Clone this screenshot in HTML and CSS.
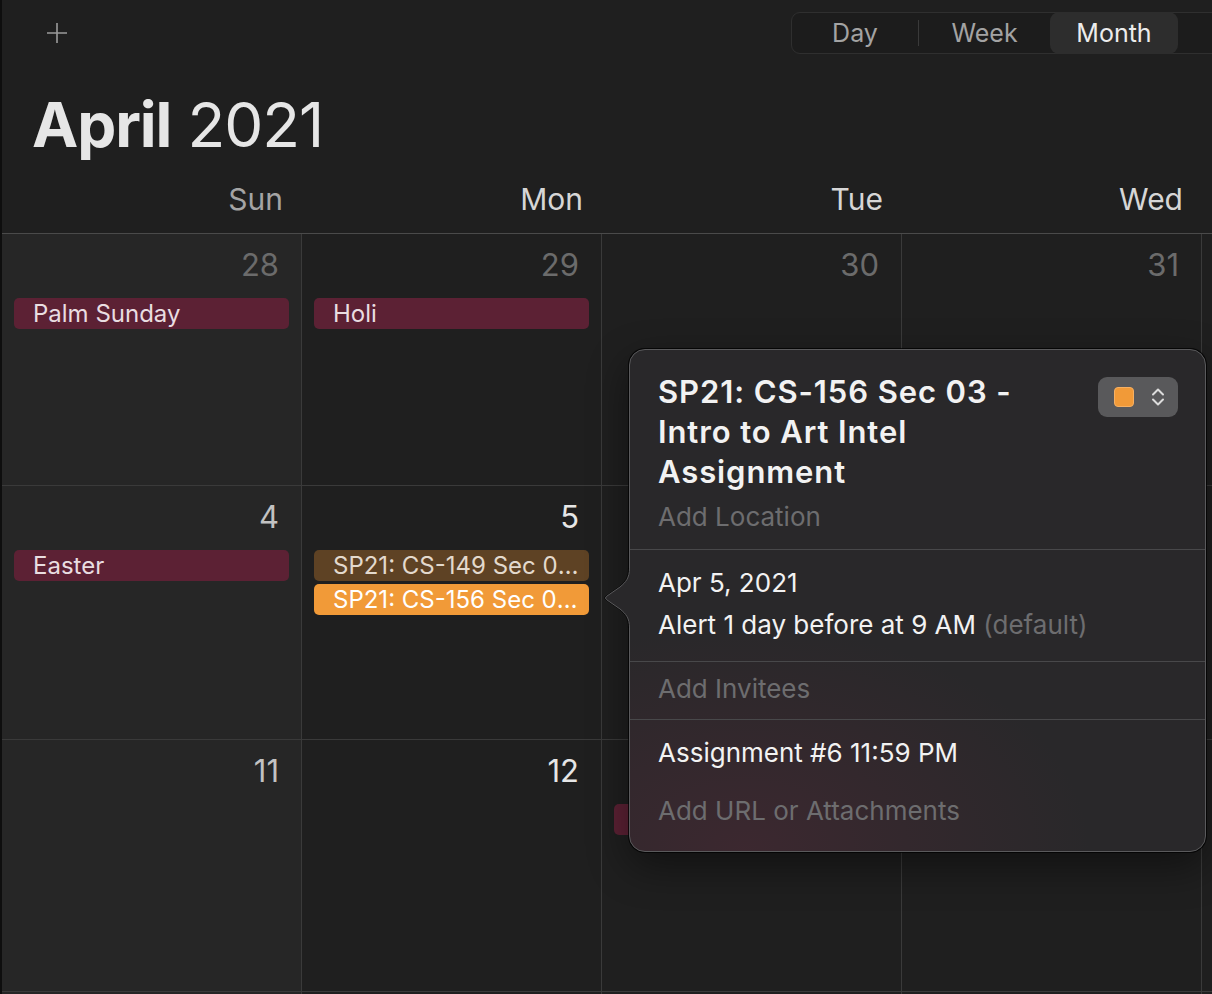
FILE: index.html
```html
<!DOCTYPE html>
<html lang="en">
<head>
<meta charset="utf-8">
<title>Calendar – April 2021</title>
<link rel="stylesheet" href="styles.css">
</head>
<body>
<div class="window">
  <header class="toolbar">
    <button class="add-btn" aria-label="Add event">
      <svg width="22" height="22" viewBox="0 0 22 22"><path d="M11 1v20M1 11h20" stroke="#9b9b9b" stroke-width="1.6" fill="none"/></svg>
    </button>
    <nav class="seg">
      <span class="seg-item seg-day">Day</span>
      <span class="seg-sep"></span>
      <span class="seg-item seg-week">Week</span>
      <span class="seg-item seg-month active">Month</span>
      <span class="seg-item seg-year">Year</span>
    </nav>
  </header>

  <h1 class="title"><strong>April</strong> 2021</h1>

  <div class="weekdays">
    <div class="wd wd-sun">Sun</div>
    <div class="wd">Mon</div>
    <div class="wd">Tue</div>
    <div class="wd">Wed</div>
    <div class="wd">Thu</div>
  </div>

  <div class="month">
    <div class="cell sun other"><div class="num">28</div><div class="events"><div class="ev ev-holiday">Palm Sunday</div></div></div>
    <div class="cell other"><div class="num">29</div><div class="events"><div class="ev ev-holiday">Holi</div></div></div>
    <div class="cell other"><div class="num">30</div></div>
    <div class="cell other"><div class="num">31</div></div>
    <div class="cell"><div class="num">1</div></div>

    <div class="cell sun"><div class="num">4</div><div class="events"><div class="ev ev-holiday">Easter</div></div></div>
    <div class="cell"><div class="num">5</div><div class="events"><div class="ev ev-course">SP21: CS-149 Sec 01 - Data Structures Quiz</div><div class="ev ev-selected">SP21: CS-156 Sec 03 - Intro to Art Intel Assignment</div></div></div>
    <div class="cell"><div class="num">6</div></div>
    <div class="cell"><div class="num">7</div></div>
    <div class="cell"><div class="num">8</div></div>

    <div class="cell sun"><div class="num">11</div></div>
    <div class="cell"><div class="num">12</div></div>
    <div class="cell"><div class="num">13</div><div class="events"><div class="ev ev-holiday">Ramadan</div></div></div>
    <div class="cell"><div class="num">14</div></div>
    <div class="cell"><div class="num">15</div></div>

    <div class="cell sun"><div class="num">18</div></div>
    <div class="cell"><div class="num">19</div></div>
    <div class="cell"><div class="num">20</div></div>
    <div class="cell"><div class="num">21</div></div>
    <div class="cell"><div class="num">22</div></div>
  </div>

  <section class="popover">
    <div class="pop-sec pop-head">
      <div class="pop-head-text">
        <h2 class="pop-title">SP21: CS-156 Sec 03 - Intro to Art Intel Assignment</h2>
        <div class="pop-line muted">Add Location</div>
      </div>
      <button class="swatch" aria-label="Calendar colour">
        <span class="swatch-color"></span>
        <svg width="14" height="22" viewBox="0 0 14 22"><path d="M2 8.5L7 3.5L12 8.5M2 13.5L7 18.5L12 13.5" stroke="#dcdcdc" stroke-width="2" fill="none" stroke-linecap="round" stroke-linejoin="round"/></svg>
      </button>
    </div>
    <div class="pop-sec pop-when">
      <div class="pop-line tall">Apr 5, 2021</div>
      <div class="pop-line tall">Alert 1 day before at 9 AM <span class="muted">(default)</span></div>
    </div>
    <div class="pop-sec pop-invitees">
      <div class="pop-line muted">Add Invitees</div>
    </div>
    <div class="pop-sec pop-notes">
      <div class="pop-line">Assignment #6 11:59 PM</div>
      <div class="pop-line muted">Add URL or Attachments</div>
    </div>
    <svg class="pop-arrow" width="28" height="60" viewBox="0 0 28 60">
      <path d="M26.5 0C26.5 10 23 14 17 19L3.6 28.3Q1.2 30 3.6 31.7L17 41C23 46 26.5 50 26.5 60L28 60L28 0Z" fill="#29282a"/>
      <path d="M26.5 0C26.5 10 23 14 17 19L3.6 28.3Q1.2 30 3.6 31.7L17 41C23 46 26.5 50 26.5 60" fill="none" stroke="#5a5a5c" stroke-width="1"/>
    </svg>
  </section>
</div>
</body>
</html>
```

FILE: styles.css
```css
* { box-sizing: border-box; }

html, body {
  margin: 0;
  height: 100%;
}

body {
  background: #1f1f1f;
  overflow: hidden;
  font-family: Inter, "Noto Sans", "Liberation Sans", sans-serif;
  color: #e5e5e5;
}

.window {
  position: relative;
  min-height: 100vh;
  border-left: 2px solid #0e0e0e;
}

/* ---------- toolbar ---------- */
.toolbar {
  display: flex;
  align-items: flex-start;
  height: 68px;
  padding-left: 44px;
}

.add-btn {
  display: block;
  width: 22px;
  height: 22px;
  margin-top: 22px;
  padding: 0;
  border: 0;
  background: none;
}

.seg {
  flex: none;
  display: flex;
  align-items: center;
  height: 42px;
  margin-top: 12px;
  margin-left: auto;
  margin-right: -97px;
  border: 1px solid #2f2f2f;
  border-radius: 9px;
  background: #1c1c1c;
  font-size: 25px;
  color: #a3a3a3;
}

.seg-item {
  display: flex;
  align-items: center;
  justify-content: center;
  height: 40px;
}

.seg-day { width: 126px; }
.seg-week { width: 131px; }
.seg-month { width: 128px; }
.seg-year { width: 130px; }

.seg-sep {
  width: 1px;
  height: 26px;
  background: #3a3a3a;
}

.seg-item.active {
  height: 42px;
  border-radius: 9px;
  background: #2d2d2d;
  color: #ececec;
}

/* ---------- title ---------- */
.title {
  margin: 26px 0 0;
  padding-left: 30px;
  font-size: 62px;
  line-height: 62px;
  font-weight: 400;
  letter-spacing: -1.1px;
  color: #e6e6e6;
}

.title strong { font-weight: 700; }

/* ---------- weekdays ---------- */
.weekdays {
  display: grid;
  grid-template-columns: repeat(5, 300px);
  height: 78px;
  padding-top: 25px;
  border-bottom: 1px solid #4a4a4a;
}

.wd {
  padding-right: 19px;
  text-align: right;
  font-size: 30px;
  line-height: 36px;
  color: #d6d6d6;
}

.wd-sun { color: #a4a4a4; }

/* ---------- month grid ---------- */
.month {
  display: grid;
  grid-template-columns: repeat(5, 300px);
  grid-template-rows: 252px 254px 252px 253px;
}

.cell {
  padding: 13px 12px 0;
  border-right: 1px solid #3a3a3a;
  border-bottom: 1px solid #3a3a3a;
  background: #1f1f1f;
}

.cell.sun { background: #262626; }

.num {
  padding-right: 10px;
  text-align: right;
  font-size: 31px;
  line-height: 36px;
  color: #e6e6e6;
}

.cell.sun .num { color: #c2c2c2; }
.cell.other .num { color: #6b6b6b; }

.events {
  display: flex;
  flex-direction: column;
  gap: 3px;
  margin-top: 15px;
}

.ev {
  height: 31px;
  padding: 0 10px 0 19px;
  border-radius: 5px;
  font-size: 24px;
  line-height: 31px;
  white-space: nowrap;
  overflow: hidden;
  text-overflow: ellipsis;
}

.ev-holiday { background: #5c2134; color: #e9dde1; }
.ev-course { background: #5e4224; color: #e3d9cd; }
.ev-selected { background: #f19a38; color: #ffffff; }

/* ---------- popover ---------- */
.popover {
  position: absolute;
  left: 627px;
  top: 349px;
  width: 577px;
  border: 1px solid #5a5a5c;
  border-radius: 16px;
  background:
    radial-gradient(ellipse 60% 45% at 20% 100%, rgba(95, 40, 58, 0.35), rgba(95, 40, 58, 0) 100%),
    #29282a;
  box-shadow: 0 0 0 1px rgba(0, 0, 0, 0.75), 0 14px 40px rgba(0, 0, 0, 0.45);
  color: #f2f2f2;
  font-size: 26px;
}

.pop-sec {
  padding: 0 27px 0 28px;
  border-top: 1px solid #48484a;
}

.pop-head {
  display: flex;
  align-items: flex-start;
  justify-content: space-between;
  padding-top: 22px;
  padding-bottom: 15px;
  border-top: 0;
}

.pop-title {
  max-width: 400px;
  margin: 0;
  font-size: 31px;
  line-height: 40px;
  font-weight: 600;
  letter-spacing: 0.9px;
  color: #f2f2f2;
}

.pop-head-text .pop-line { margin-top: 8px; }

.pop-line {
  line-height: 34px;
  white-space: nowrap;
}

.pop-line.tall { line-height: 42px; }

.muted { color: #6d6d6f; }

.pop-when { padding-top: 12px; padding-bottom: 15px; }
.pop-invitees { padding-top: 10px; padding-bottom: 13px; }
.pop-notes {
  display: flex;
  flex-direction: column;
  gap: 24px;
  padding-top: 16px;
  padding-bottom: 23px;
}

.swatch {
  flex: none;
  display: flex;
  align-items: center;
  gap: 17px;
  width: 80px;
  height: 40px;
  margin-top: 5px;
  padding: 0 0 0 16px;
  border: 0;
  border-radius: 9px;
  background: #59595b;
}

.swatch-color {
  width: 20px;
  height: 20px;
  border-radius: 4px;
  border: 1px solid #f6b063;
  background: #f19a38;
}

.pop-arrow {
  position: absolute;
  left: -27px;
  top: 218px;
  display: block;
  filter: drop-shadow(-1px 0 0 rgba(0, 0, 0, 0.6));
}
```
